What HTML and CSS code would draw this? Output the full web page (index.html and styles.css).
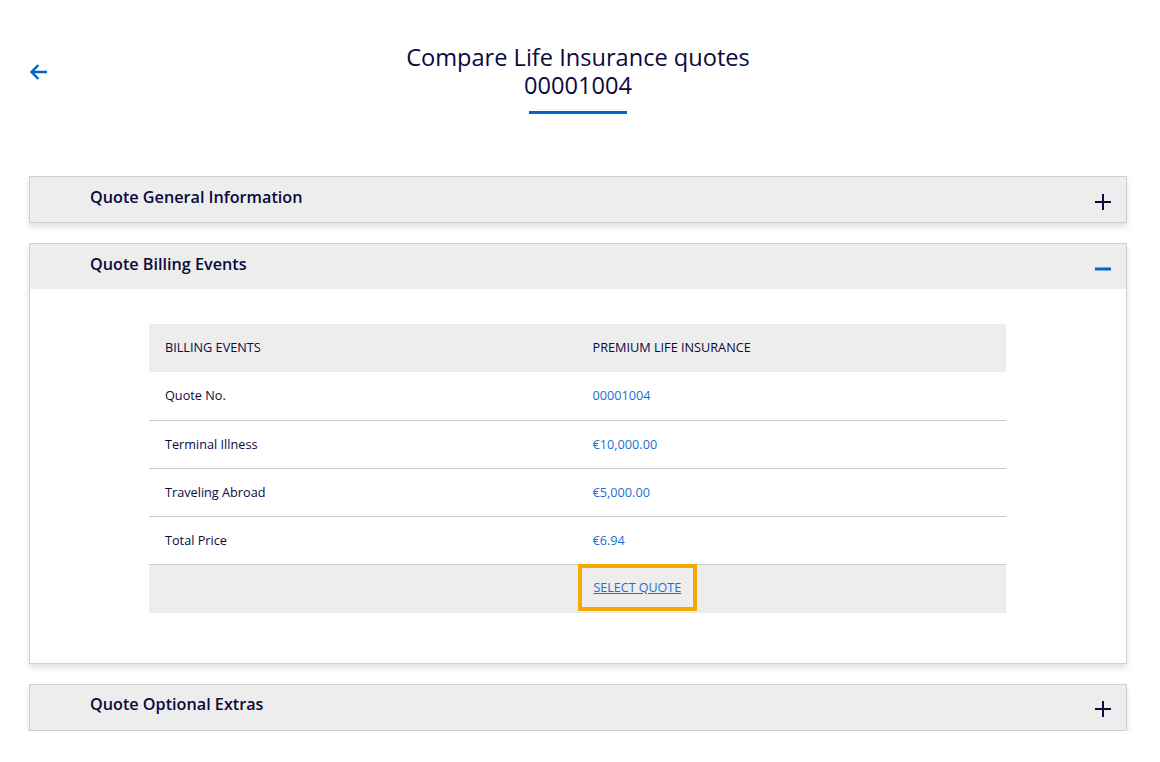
FILE: index.html
```html
<!DOCTYPE html>
<html lang="en">
<head>
<meta charset="utf-8">
<title>Compare Life Insurance quotes</title>
<link rel="stylesheet" href="styles.css">
</head>
<body>
<div class="page">
  <header class="page-head">
    <a class="back" href="#" aria-label="Back">
      <svg width="18" height="16" viewBox="0 0 18 16"><path d="M17 8H3M8.5 2L2.5 8l6 6" fill="none" stroke="#0066cc" stroke-width="2.4" stroke-linecap="square"/></svg>
    </a>
    <div class="title-wrap">
      <h1 class="title"><span class="title-line">Compare Life Insurance quotes</span><span class="title-line">00001004</span></h1>
      <div class="title-bar"></div>
    </div>
  </header>

  <div class="accordions">
    <section class="acc">
      <div class="acc-head">
        <span class="acc-title">Quote General Information</span>
        <svg class="acc-icon" width="16" height="16" viewBox="0 0 16 16"><path d="M8 0v16M0 8h16" stroke="#0a0a3c" stroke-width="2"/></svg>
      </div>
    </section>

    <section class="acc open">
      <div class="acc-head">
        <span class="acc-title">Quote Billing Events</span>
        <svg class="acc-icon" width="16" height="16" viewBox="0 0 16 16"><path d="M0 8h16" stroke="#0066cc" stroke-width="3"/></svg>
      </div>
      <div class="acc-body">
        <table class="billing">
          <thead>
            <tr><th>BILLING EVENTS</th><th>PREMIUM LIFE INSURANCE</th></tr>
          </thead>
          <tbody>
            <tr><td>Quote No.</td><td class="val">00001004</td></tr>
            <tr><td>Terminal Illness</td><td class="val">€10,000.00</td></tr>
            <tr><td>Traveling Abroad</td><td class="val">€5,000.00</td></tr>
            <tr><td>Total Price</td><td class="val">€6.94</td></tr>
            <tr class="action-row"><td></td><td><a class="select" href="#">SELECT QUOTE</a></td></tr>
          </tbody>
        </table>
      </div>
    </section>

    <section class="acc">
      <div class="acc-head">
        <span class="acc-title">Quote Optional Extras</span>
        <svg class="acc-icon" width="16" height="16" viewBox="0 0 16 16"><path d="M8 0v16M0 8h16" stroke="#0a0a3c" stroke-width="2"/></svg>
      </div>
    </section>
  </div>
</div>
</body>
</html>
```

FILE: styles.css
```css
* { box-sizing: border-box; }
html, body { margin: 0; padding: 0; background: #fff; }
body {
  font-family: "Open Sans", "Noto Sans", sans-serif;
  color: #0a0a3c;
}
.page {
  padding: 44px 33px 0 29px;
}
.page-head {
  position: relative;
  display: flex;
  justify-content: center;
  height: 132px;
}
.back {
  position: absolute;
  left: 0;
  top: 20px;
  display: block;
  width: 18px;
  height: 16px;
  line-height: 0;
}
.title-wrap {
  display: flex;
  flex-direction: column;
  align-items: center;
}
.title {
  margin: 0;
  font-size: 23.6px;
  font-weight: 500;
  text-align: center;
  color: #0a0a3c;
  display: flex;
  flex-direction: column;
  align-items: center;
}
.title-line {
  display: block;
  line-height: 28px;
  position: relative;
  top: -1px;
}
.title-bar {
  width: 98px;
  height: 3px;
  background: #0066cc;
  margin-top: 11px;
}
.accordions {
  display: flex;
  flex-direction: column;
  gap: 20px;
}
.acc {
  border: 1px solid #cfcfcf;
  background: #fff;
  box-shadow: 0 4px 6px rgba(0,0,0,0.12);
}
.acc-head {
  display: flex;
  align-items: center;
  justify-content: space-between;
  height: 45px;
  padding: 0 15px 0 60px;
  background: #ededed;
}
.acc-title {
  font-size: 16.2px;
  font-weight: 550;
  color: #0a0a3c;
  position: relative;
  top: -3px;
}
.acc-icon { position: relative; top: 2px; }
.acc-body {
  padding: 35px 120px 50px 119px;
}
.billing {
  width: 100%;
  border-collapse: collapse;
  font-size: 12.7px;
  table-layout: fixed;
}
.billing th, .billing td {
  width: 50%;
  text-align: left;
  padding: 0 16px;
  height: 48px;
  vertical-align: middle;
}
.billing th {
  background: #ededed;
  font-weight: 400;
  color: #0a0a3c;
  height: 48px;
  padding-bottom: 3px;
}
.billing th:last-child, .billing td:last-child { padding-left: 15px; }
.billing tbody tr { border-top: 1px solid #cccccc; }
.billing tbody tr:first-child { border-top: none; }
.billing td { color: #0a0a3c; padding-bottom: 1px; }
.billing td.val { color: #1a6fcf; }
.action-row td { background: #ededed; }
.billing .action-row td:last-child { padding-left: 0; }
.select {
  display: inline-block;
  padding: 11px 12px 11px;
  border: 4px solid #f2aa00;
  color: #1a6fcf;
  text-decoration: underline;
  font-size: 12.5px;
  line-height: 17px;
  position: relative;
  top: -1px;
}
```
